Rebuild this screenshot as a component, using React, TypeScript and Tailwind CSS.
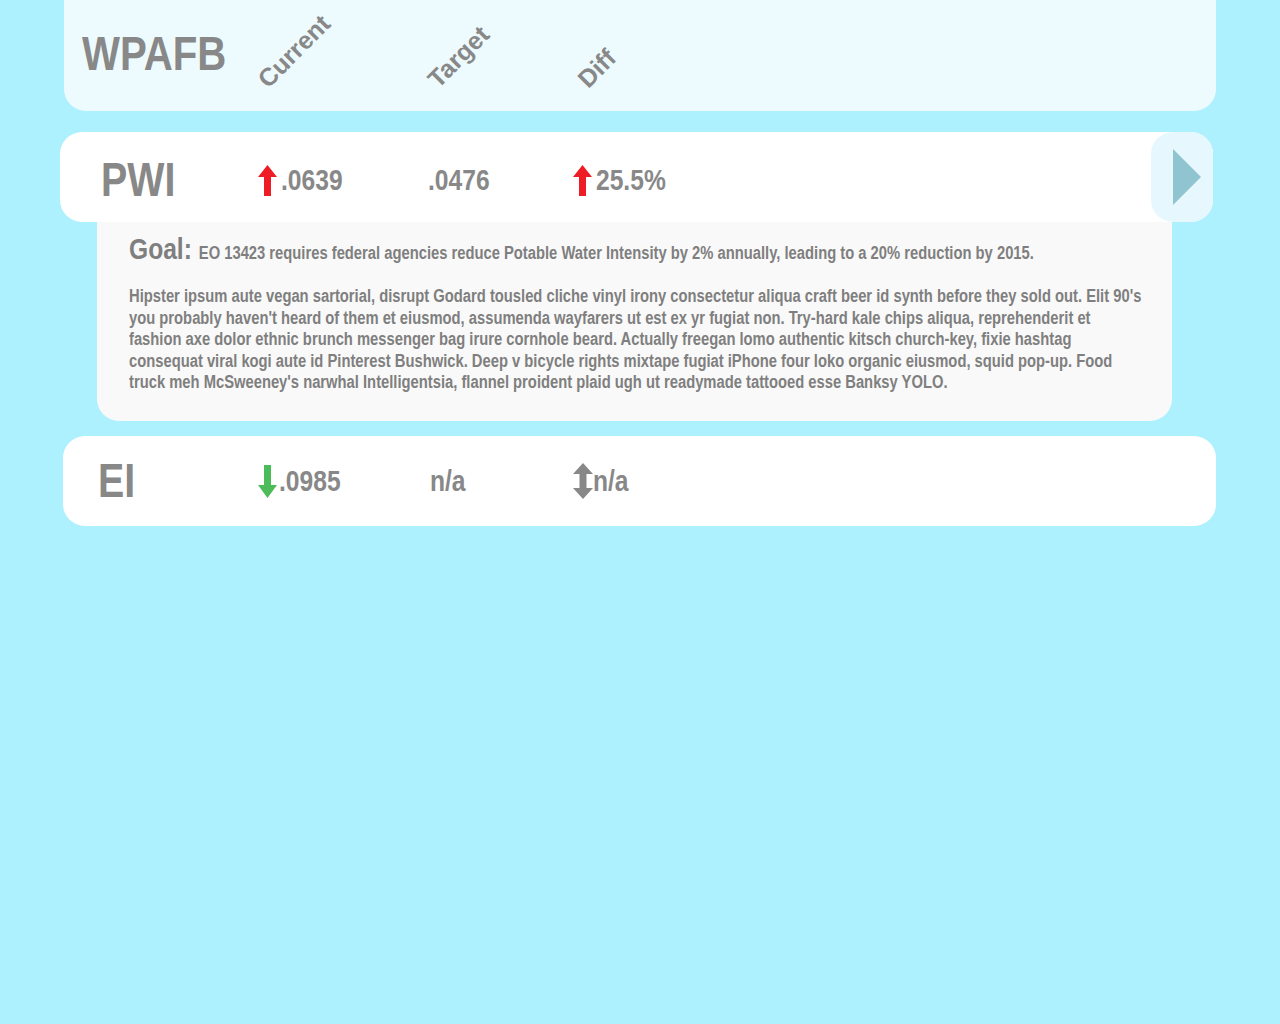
import React from 'react';

const sans = { fontFamily: '"Liberation Sans", Arial, sans-serif' };

// no narrow face installed, so squeeze Liberation Sans horizontally
const squeeze = 'inline-block origin-left scale-x-[0.82] whitespace-nowrap';

function UpArrow({ color }: { color: string }) {
  return (
    <svg width="19" height="31" viewBox="0 0 19 31" className="shrink-0">
      <polygon points="9.5,0 19,12 13,12 13,31 6,31 6,12 0,12" fill={color} />
    </svg>
  );
}

function DownArrow({ color }: { color: string }) {
  return (
    <svg width="19" height="33" viewBox="0 0 19 33" className="shrink-0">
      <polygon points="6,0 13,0 13,20 19,20 9.5,33 0,20 6,20" fill={color} />
    </svg>
  );
}

function UpDownArrow({ color }: { color: string }) {
  return (
    <svg width="20" height="36" viewBox="0 0 20 36" className="shrink-0">
      <polygon points="10,0 20,11 13.5,11 13.5,25 20,25 10,36 0,25 6.5,25 6.5,11 0,11" fill={color} />
    </svg>
  );
}

function Header() {
  const labels = [
    { text: 'Current', w: 'w-[170px]' },
    { text: 'Target', w: 'w-[150px]' },
    { text: 'Diff', w: 'w-[100px]' },
  ];
  return (
    <div className="ml-[64px] w-[1152px] h-[111px] bg-[#eefbfe] rounded-b-[22px] flex items-center pl-[18px]">
      <div className="w-[176px] text-[49px] font-bold text-[#888888] leading-none pb-[4px]">
        <span className={squeeze}>WPAFB</span>
      </div>
      {labels.map((l) => (
        <div key={l.text} className={`${l.w} h-full relative`}>
          <span className="absolute left-[13px] top-[67px] origin-bottom-left -rotate-45 text-[25px] font-bold text-[#888888] leading-none whitespace-nowrap">
            {l.text}
          </span>
        </div>
      ))}
    </div>
  );
}

function Metric({
  icon,
  value,
  w,
  gap = 'gap-[4px]',
}: {
  icon?: React.ReactNode;
  value: string;
  w: string;
  gap?: string;
}) {
  return (
    <div className={`${w} ${gap} flex items-center`}>
      {icon}
      <span className={`${squeeze} text-[30px] font-bold text-[#888888] leading-none`}>{value}</span>
    </div>
  );
}

const lines = [
  "Hipster ipsum aute vegan sartorial, disrupt Godard tousled cliche vinyl irony consectetur aliqua craft beer id synth before they sold out. Elit 90's",
  "you probably haven't heard of them et eiusmod, assumenda wayfarers ut est ex yr fugiat non. Try-hard kale chips aliqua, reprehenderit et",
  'fashion axe dolor ethnic brunch messenger bag irure cornhole beard. Actually freegan lomo authentic kitsch church-key, fixie hashtag',
  'consequat viral kogi aute id Pinterest Bushwick. Deep v bicycle rights mixtape fugiat iPhone four loko organic eiusmod, squid pop-up. Food',
  "truck meh McSweeney's narwhal Intelligentsia, flannel proident plaid ugh ut readymade tattooed esse Banksy YOLO.",
];

export default function App() {
  return (
    <div className="min-h-screen bg-[#adf0fe] pb-10" style={sans}>
      <Header />

      {/* PWI row */}
      <div className="mt-[21px] ml-[60px] w-[1153px] h-[90px] bg-white rounded-[22px] flex items-stretch pl-[41px]">
        <div className="flex items-center pt-[6px]">
          <div className="w-[157px] text-[48px] font-bold text-[#888888] leading-none">
            <span className={squeeze}>PWI</span>
          </div>
          <Metric w="w-[170px]" icon={<UpArrow color="#ee1c25" />} value=".0639" />
          <Metric w="w-[145px]" value=".0476" />
          <Metric w="w-[150px]" icon={<UpArrow color="#ee1c25" />} value="25.5%" />
        </div>
        <button className="ml-auto w-[62px] rounded-[22px] bg-[#e6f8fd] flex items-center pl-[22px]">
          <svg width="28" height="56" viewBox="0 0 28 56">
            <polygon points="0,0 28,28 0,56" fill="#90c4d0" />
          </svg>
        </button>
      </div>

      {/* PWI detail */}
      <div className="ml-[97px] w-[1075px] overflow-hidden bg-[#f9f9f9] rounded-b-[22px] pl-[32px] pr-[28px] pt-[12px] pb-[26px] text-[#7f7f7f] font-bold">
        <div className={`${squeeze} leading-none`}>
          <span className="text-[30px]">Goal:</span>{' '}
          <span className="text-[18px] ml-[4px]">
            EO 13423 requires federal agencies reduce Potable Water Intensity by 2% annually, leading to a 20% reduction by 2015.
          </span>
        </div>
        <p className={`${squeeze} block mt-[20px] text-[18px] leading-[21.6px]`}>
          {lines.map((t, i) => (
            <React.Fragment key={i}>
              {t}
              {i < lines.length - 1 && <br />}
            </React.Fragment>
          ))}
        </p>
      </div>

      {/* EI row */}
      <div className="mt-[15px] ml-[63px] w-[1153px] h-[90px] bg-white rounded-[22px] flex items-center pl-[35px]">
        <div className="w-[160px] text-[48px] font-bold text-[#888888] leading-none">
          <span className={squeeze}>EI</span>
        </div>
        <Metric w="w-[172px]" gap="gap-[2px]" icon={<DownArrow color="#4cbb5a" />} value=".0985" />
        <Metric w="w-[143px]" value="n/a" />
        <Metric w="w-[150px]" gap="gap-0" icon={<UpDownArrow color="#888888" />} value="n/a" />
      </div>
    </div>
  );
}
